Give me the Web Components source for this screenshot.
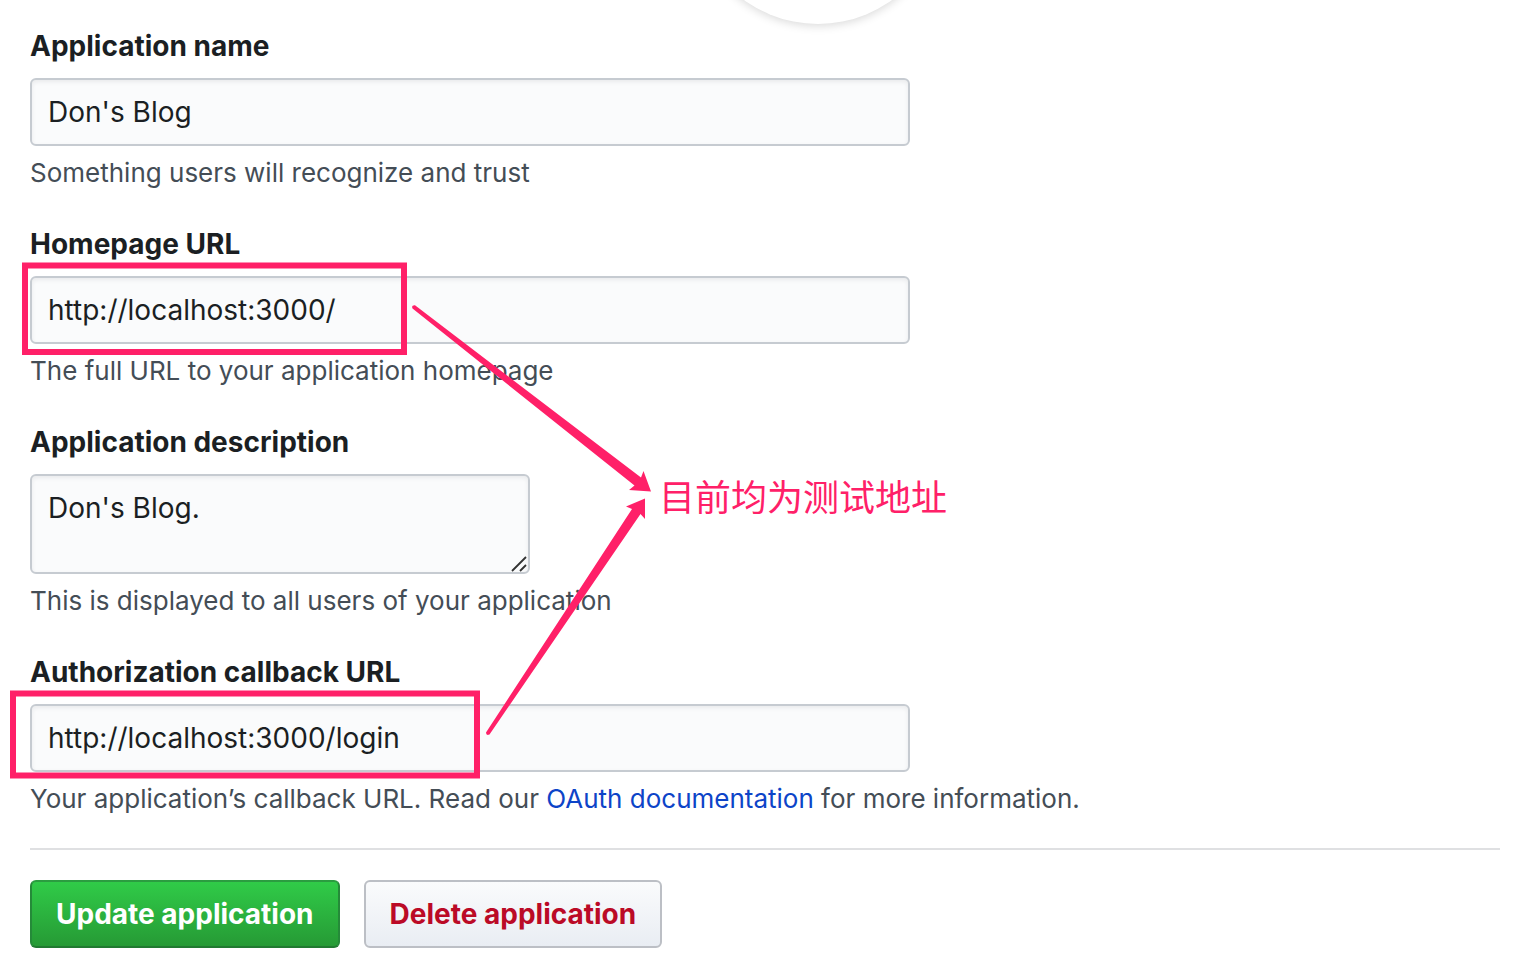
<!DOCTYPE html>
<html lang="en">
<head>
<meta charset="utf-8">
<title>Edit application</title>
<style>
  body { margin: 0; background: #fff; color: #1b1f23; font-family: Inter, "Liberation Sans", sans-serif; font-size: 28px; }
</style>
</head>
<body>
<app-settings></app-settings>
<script>
const define = (name, html, setup) => {
  const template = document.createElement('template');
  template.innerHTML = html;
  customElements.define(name, class extends HTMLElement {
    constructor() {
      super();
      this.attachShadow({ mode: 'open' }).append(template.content.cloneNode(true));
    }
    connectedCallback() { if (setup) setup(this, this.shadowRoot); }
  });
};

define('app-logo', `
  <style>
    :host { display: block; position: absolute; left: 692px; top: -228px; width: 252px; height: 252px;
      border-radius: 50%; background: #fff; box-shadow: 0 2px 10px rgba(0,0,0,.15); }
  </style>`);

const fieldStyle = `
  <style>
    :host { display: block; }
    label { display: block; font-weight: 700; line-height: 40px; margin-bottom: 12px; }
    .box { position: relative; width: 100%; max-width: 880px; }
    :host([multiline]) .box { max-width: 500px; }
    input, textarea { display: block; box-sizing: border-box; width: 100%; height: 68px; margin: 0; padding: 0 16px;
      border: 2px solid #c6cbd1; border-radius: 6px; background: #fafbfc; color: #1b1f23;
      box-shadow: inset 0 2px 4px rgba(27,31,35,.075); font: inherit; outline: none; }
    textarea { height: 100px; padding: 12px 16px; line-height: 40px; resize: none; overflow: hidden; }
    svg { position: absolute; right: 3px; bottom: 2px; width: 16px; height: 16px; }
    p { margin: 8px 0 0; font-size: 26px; line-height: 38px; color: #444d56; }
    ::slotted(a) { color: #0d44c8; text-decoration: none; }
  </style>`;

define('app-field', `${fieldStyle}
  <label for="control"></label>
  <div class="box"><input id="control" type="text"></div>
  <p><slot></slot></p>`, (host, root) => {
  root.querySelector('label').textContent = host.getAttribute('label');
  root.querySelector('input').value = host.getAttribute('value');
});

define('app-text-field', `${fieldStyle}
  <label for="control"></label>
  <div class="box"><textarea id="control"></textarea>
    <svg viewBox="0 0 16 16" aria-hidden="true"><path d="M1 15 15 1M9 15l6-6" stroke="#333" stroke-width="1.8"/></svg>
  </div>
  <p><slot></slot></p>`, (host, root) => {
  root.querySelector('label').textContent = host.getAttribute('label');
  root.querySelector('textarea').value = host.getAttribute('value');
});

define('app-button', `
  <style>
    :host { display: block; }
    button { display: block; box-sizing: border-box; height: 68px; padding: 0 24px; border: 2px solid #bcbfc5;
      border-radius: 6px; background: #eff3f6 linear-gradient(#fafbfc, #e9edf3); color: #bb0a26;
      font: inherit; font-weight: 700; white-space: nowrap; }
    :host([primary]) button { color: #fff; border-color: #2b9c40 #258a39 #217a31;
      background: #28a745 linear-gradient(#30cb48, #269a35); }
  </style>
  <button type="button"><slot></slot></button>`);

define('app-annotations', `
  <style>
    :host { display: block; position: absolute; left: 0; top: 0; pointer-events: none; color: #ff2068; }
    svg { display: block; width: 960px; height: 800px; }
    span { position: absolute; left: 659px; top: 469px; font: 400 36px/52px "Noto Sans CJK SC", sans-serif; white-space: nowrap; }
  </style>
  <svg viewBox="0 0 960 800" aria-hidden="true">
    <g fill="none" stroke="currentColor" stroke-width="6">
      <rect x="25" y="265.500" width="379" height="86.500"/>
      <rect x="13" y="693.500" width="464" height="82"/>
    </g>
    <g fill="currentColor">
      <path d="M415 305.300 641 477.500 643.500 471 651 491.500 629 490 634.500 485.500 412.500 308.500Q411 305 415 305.300Z"/>
      <path d="M486 732.500 632 509 626 506.500 645 498.500V519L640.500 514 489.500 734.500Q486 736 486 732.500Z"/>
    </g>
  </svg>
  <span lang="zh-CN">目前均为测试地址</span>`);

define('app-settings', `
  <style>
    :host { display: block; position: relative; overflow: hidden; padding: 26px 26px 20px 30px; }
    form { display: flex; flex-direction: column; gap: 32px; }
    footer { display: flex; gap: 24px; margin-top: 30px; padding-top: 30px; border-top: 2px solid #dfe0e2; }
  </style>
  <app-logo></app-logo>
  <form>
    <app-field label="Application name" value="Don's Blog">Something users will recognize and trust</app-field>
    <app-field label="Homepage URL" value="http://localhost:3000/">The full URL to your application homepage</app-field>
    <app-text-field multiline label="Application description" value="Don's Blog.">This is displayed to all users of your application</app-text-field>
    <app-field label="Authorization callback URL" value="http://localhost:3000/login">Your application’s callback URL. Read our <a href="#oauth">OAuth documentation</a> for more information.</app-field>
  </form>
  <footer>
    <app-button primary>Update application</app-button>
    <app-button>Delete application</app-button>
  </footer>
  <app-annotations></app-annotations>`);
</script>
</body>
</html>
